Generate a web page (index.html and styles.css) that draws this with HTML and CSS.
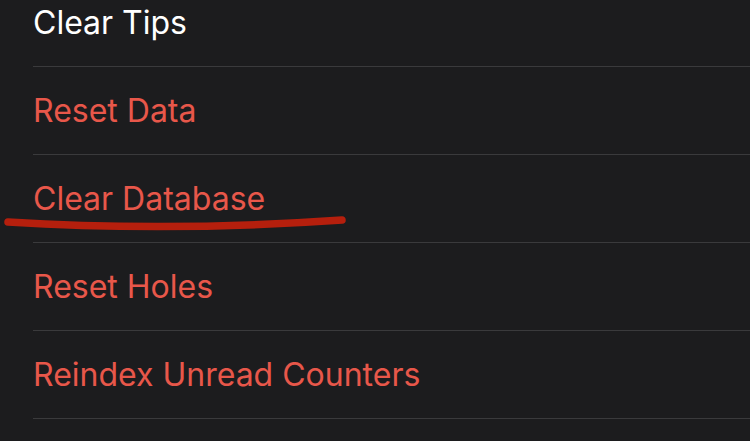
FILE: index.html
```html
<!DOCTYPE html>
<html lang="en">
<head>
<meta charset="UTF-8">
<meta name="viewport" content="width=device-width, initial-scale=1.0">
<title>Settings</title>
<link rel="stylesheet" href="styles.css">
</head>
<body>

<ul class="settings-list">
    <li class="row"><span class="label">Clear Tips</span></li>
    <li class="row"><span class="label danger">Reset Data</span></li>
    <li class="row marked">
        <span class="label danger">Clear Database</span>
        <svg class="scribble" width="360" height="30" viewBox="0 0 360 30">
            <path d="M8 12 Q 170 22 342 10" fill="none" stroke="#b51f0d" stroke-width="7.5" stroke-linecap="round"/>
        </svg>
    </li>
    <li class="row"><span class="label danger">Reset Holes</span></li>
    <li class="row"><span class="label danger">Reindex Unread Counters</span></li>
</ul>

</body>
</html>
```

FILE: styles.css
```css
body {
    margin: 0;
    background: #1c1c1e;
    font-family: Inter, "Noto Sans", sans-serif;
    overflow: hidden;
}
.settings-list {
    list-style: none;
    margin: -21px 0 0 0;
    padding: 0 0 0 33px;
}
.row {
    position: relative;
    height: 87px;
    display: flex;
    align-items: center;
    border-bottom: 1px solid #3a3a3c;
}
.label {
    color: #ffffff;
    font-size: 32px;
}
.label.danger {
    color: #e8574a;
}
.scribble {
    position: absolute;
    left: -33px;
    top: 55px;
}
```
